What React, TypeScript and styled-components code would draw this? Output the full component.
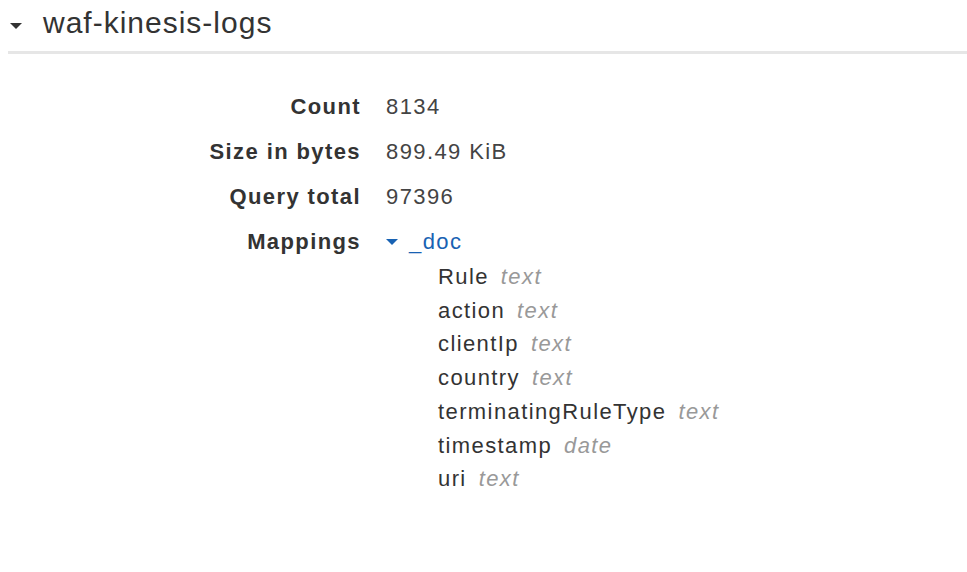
import React from "react";
import styled, { createGlobalStyle } from "styled-components";

const Global = createGlobalStyle`
  html, body { margin: 0; padding: 0; background: #ffffff; }
  body { font-family: "Liberation Sans", Arial, sans-serif; color: #333; }
`;

const Page = styled.div`
  width: 967px;
  height: 572px;
  overflow: hidden;
  background: #fff;
`;

const Header = styled.div`
  margin-left: 8px;
  padding: 3px 0 8px 2px;
  display: flex;
  align-items: center;
  border-bottom: 3px solid #e6e6e6;
`;

const Caret = styled.span<{ $size: number; $color: string }>`
  display: inline-block;
  width: 0;
  height: 0;
  border-left: ${(p) => p.$size / 2}px solid transparent;
  border-right: ${(p) => p.$size / 2}px solid transparent;
  border-top: ${(p) => Math.round(p.$size / 2)}px solid ${(p) => p.$color};
`;

const HeaderCaret = styled(Caret)`
  margin-top: 6px;
`;

const Title = styled.h2`
  margin: 0 0 0 21px;
  font-size: 30px;
  line-height: 40px;
  font-weight: 400;
  letter-spacing: 1px;
  color: #333;
`;

const Body = styled.div`
  padding: 35px 0 0 8px;
  display: flex;
  flex-direction: column;
  gap: 9px;
  font-size: 22px;
  letter-spacing: 1.4px;
`;

const Row = styled.div`
  display: flex;
  align-items: flex-start;
  line-height: 36px;
`;

const Label = styled.div`
  width: 353px;
  text-align: right;
  font-weight: 700;
  color: #333;
  flex: none;
`;

const Value = styled.div`
  margin-left: 25px;
  color: #444;
`;

const DocToggle = styled.div`
  display: flex;
  align-items: center;
  gap: 11px;
  color: #1862b3;
`;

const Fields = styled.ul`
  list-style: none;
  margin: 0 0 0 52px;
  padding: 0;
  line-height: 33.7px;
`;

const Field = styled.li`
  color: #333;
  white-space: nowrap;
`;

const Type = styled.span`
  margin-left: 12px;
  font-style: italic;
  color: #999;
`;

const stats: [string, string][] = [
  ["Count", "8134"],
  ["Size in bytes", "899.49 KiB"],
  ["Query total", "97396"],
];

const fields: [string, string][] = [
  ["Rule", "text"],
  ["action", "text"],
  ["clientIp", "text"],
  ["country", "text"],
  ["terminatingRuleType", "text"],
  ["timestamp", "date"],
  ["uri", "text"],
];

export default function App() {
  return (
    <Page>
      <Global />
      <Header>
        <HeaderCaret $size={12} $color="#333" />
        <Title>waf-kinesis-logs</Title>
      </Header>
      <Body>
        {stats.map(([k, v]) => (
          <Row key={k}>
            <Label>{k}</Label>
            <Value>{v}</Value>
          </Row>
        ))}
        <Row>
          <Label>Mappings</Label>
          <Value>
            <DocToggle>
              <Caret $size={12} $color="#1862b3" />
              <span>_doc</span>
            </DocToggle>
            <Fields>
              {fields.map(([n, t]) => (
                <Field key={n}>
                  {n}
                  <Type>{t}</Type>
                </Field>
              ))}
            </Fields>
          </Value>
        </Row>
      </Body>
    </Page>
  );
}
